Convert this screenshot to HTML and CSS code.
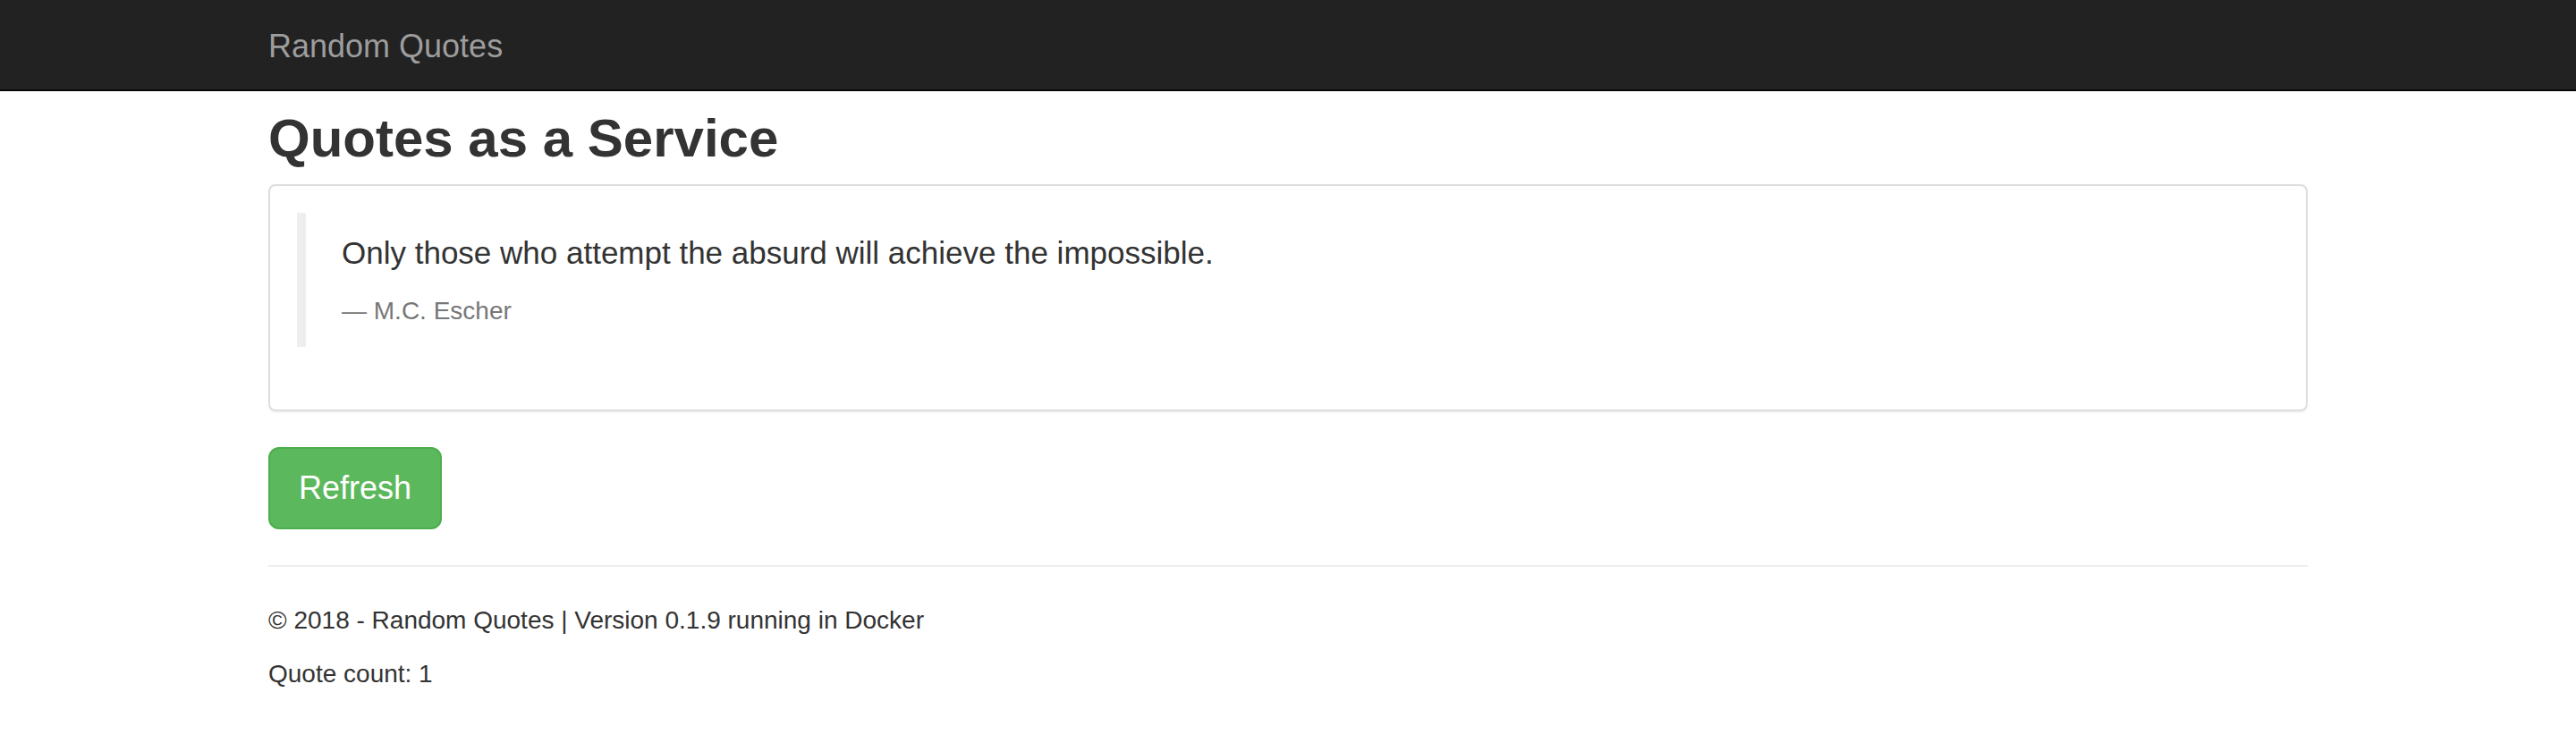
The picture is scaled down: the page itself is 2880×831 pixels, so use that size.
FILE: index.html
```html
<!DOCTYPE html>
<html lang="en">
<head>
<meta charset="utf-8">
<title>Random Quotes</title>
<link rel="stylesheet" href="styles.css">
</head>
<body>
<nav class="navbar">
  <div class="container">
    <a class="navbar-brand" href="#">Random Quotes</a>
  </div>
</nav>
<main class="container">
  <h1 class="title">Quotes as a Service</h1>
  <div class="panel">
    <blockquote class="quote">
      <p>Only those who attempt the absurd will achieve the impossible.</p>
      <footer class="author">M.C. Escher</footer>
    </blockquote>
  </div>
  <button class="btn-refresh" type="button">Refresh</button>
  <hr class="divider">
  <footer class="site-footer">
    <p>© 2018 - Random Quotes | Version 0.1.9 running in Docker</p>
    <p>Quote count: 1</p>
  </footer>
</main>
</body>
</html>
```

FILE: styles.css
```css
* {
  box-sizing: border-box;
}

html, body {
  margin: 0;
  padding: 0;
  background: #fff;
}

body {
  font-family: "Liberation Sans", Arial, Helvetica, sans-serif;
  font-size: 28px;
  line-height: 40px;
  color: #333;
}

.container {
  width: 2340px;
  margin: 0 auto;
  padding: 0 30px;
}

.navbar {
  background: #222;
  border-bottom: 2px solid #080808;
  height: 102px;
}

.navbar-brand {
  display: block;
  height: 100px;
  padding: 32px 0 28px;
  font-size: 36px;
  line-height: 40px;
  color: #9d9d9d;
  text-decoration: none;
}

.title {
  margin: 20px 0 18px;
  font-size: 60px;
  line-height: 66px;
  font-weight: 700;
  color: #333;
}

.panel {
  border: 2px solid #ddd;
  border-radius: 8px;
  padding: 30px;
  margin-bottom: 40px;
  box-shadow: 0 2px 2px rgba(0, 0, 0, 0.05);
}

.quote {
  margin: 0 0 40px;
  padding: 20px 40px;
  border-left: 10px solid #eee;
}

.quote p {
  margin: 0 0 20px;
  font-size: 35px;
  line-height: 50px;
}

.author {
  display: block;
  font-size: 28px;
  line-height: 40px;
  color: #777;
}

.author::before {
  content: "\2014 \00A0";
}

.btn-refresh {
  display: block;
  height: 92px;
  padding: 20px 32px;
  font-family: inherit;
  font-size: 36px;
  line-height: 48px;
  color: #fff;
  background: #5cb85c;
  border: 2px solid #4cae4c;
  border-radius: 12px;
  cursor: pointer;
}

.divider {
  margin: 40px 0;
  border: 0;
  border-top: 2px solid #eee;
  height: 0;
}

.site-footer p {
  margin: 0 0 20px;
}
```
